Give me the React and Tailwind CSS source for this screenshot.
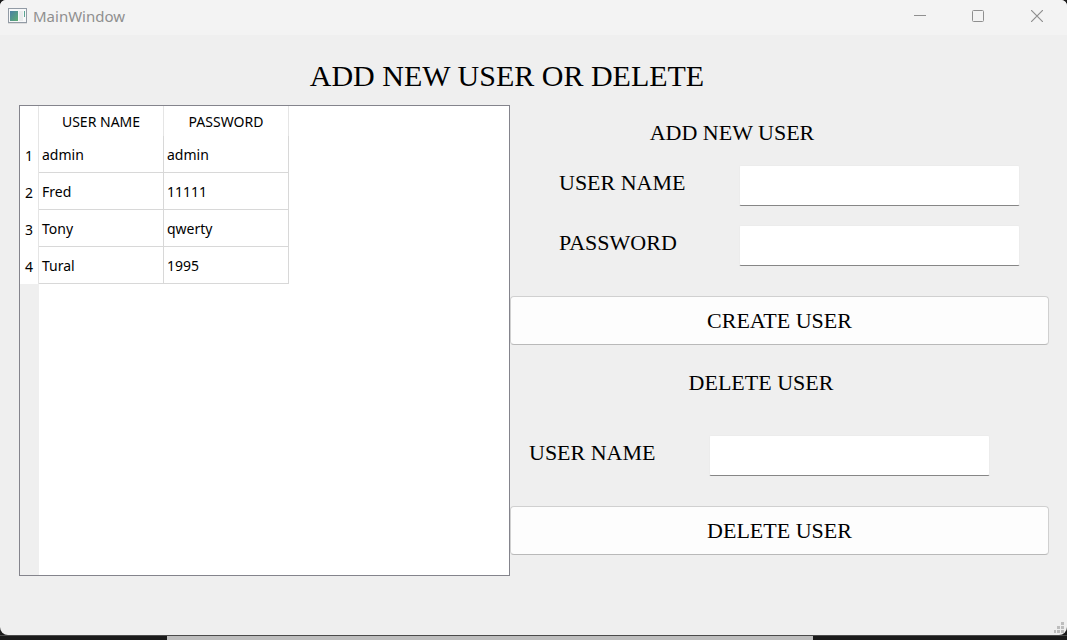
const users = [
  { name: 'admin', password: 'admin' },
  { name: 'Fred', password: '11111' },
  { name: 'Tony', password: 'qwerty' },
  { name: 'Tural', password: '1995' },
];

function TitleBar() {
  return (
    <header className="flex h-[35px] shrink-0 items-center bg-[#f3f3f3] pr-px pb-[3px] pl-2 font-['Noto_Sans',sans-serif] text-[#8f8f8f]">
      <svg className="mr-1.5" width="19" height="16" viewBox="0 0 19 16" aria-hidden="true" shapeRendering="crispEdges">
        <defs>
          <linearGradient id="pane" x1="0" y1="0" x2="1" y2="1">
            <stop offset="0" stopColor="#4a7fa5" />
            <stop offset="1" stopColor="#5fae72" />
          </linearGradient>
        </defs>
        <rect x="0" y="15" width="19" height="1" fill="#dcdcdc" />
        <rect x="0.5" y="0.5" width="18" height="14" fill="#f7f8f9" stroke="#929ba5" />
        <rect x="2" y="3" width="8" height="10" fill="url(#pane)" />
        <rect x="11" y="3" width="4" height="10" fill="#e9ebec" />
        <rect x="16" y="3" width="1" height="6" fill="#5ca592" />
      </svg>
      <h1 className="flex-1 text-[15px] leading-5">MainWindow</h1>
      <button type="button" aria-label="Minimize" className="flex h-8 w-[58px] items-center justify-center">
        <svg width="12" height="12" viewBox="0 0 12 12" stroke="#8f8f8f" fill="none"><path d="M0 5.5h12" /></svg>
      </button>
      <button type="button" aria-label="Maximize" className="flex h-8 w-[58px] items-center justify-center">
        <svg width="12" height="12" viewBox="0 0 12 12" stroke="#8f8f8f" fill="none"><rect x="0.5" y="0.5" width="11" height="11" rx="1" /></svg>
      </button>
      <button type="button" aria-label="Close" className="flex h-8 w-[59px] items-center justify-center">
        <svg width="12" height="12" viewBox="0 0 12 12" stroke="#8f8f8f" strokeWidth="1.2" fill="none"><path d="M0 0l12 12M12 0L0 12" /></svg>
      </button>
    </header>
  );
}

function UserTable() {
  return (
    <div className="flex min-h-[471px] flex-col border border-[#84848c] bg-white font-['Noto_Sans',sans-serif] text-sm text-black">
      <table className="w-[269px] table-fixed border-separate border-spacing-0 text-left">
        <colgroup>
          <col className="w-[19px]" />
          <col className="w-[125px]" />
          <col className="w-[125px]" />
        </colgroup>
        <thead>
          <tr className="h-[30px]">
            <td className="border-r border-[#e5e5e5] p-0" />
            <th scope="col" className="border-r border-[#e5e5e5] p-0 pt-px text-center font-normal">USER NAME</th>
            <th scope="col" className="border-r border-[#e5e5e5] p-0 pt-px text-center font-normal">PASSWORD</th>
          </tr>
        </thead>
        <tbody>
          {users.map((user, i) => (
            <tr key={user.name} className="h-[37px]">
              <th scope="row" className="border-r border-[#e5e5e5] p-0 pt-0.5 text-center font-normal">{i + 1}</th>
              <td className="border-r border-b border-[#d8d8d8] pt-0.5 pr-0 pb-0 pl-[3px]">{user.name}</td>
              <td className="border-r border-b border-[#d8d8d8] pt-0.5 pr-0 pb-0 pl-[3px]">{user.password}</td>
            </tr>
          ))}
        </tbody>
      </table>
      <div className="w-[19px] flex-1 bg-[#efefef]" />
    </div>
  );
}

function Field({ id, label, className }) {
  return (
    <div className={`flex items-center justify-between ${className}`}>
      <label htmlFor={id} className="pb-1.5">{label}</label>
      <input id={id} type="text" className="h-[41px] w-[281px] rounded-xs border border-[#ececec] border-b-[#868686] bg-white px-2 outline-none" />
    </div>
  );
}

function ActionButton({ children }) {
  return (
    <button type="submit" className="h-[49px] w-full rounded border border-[#d0d0d0] border-b-[#b9b9b9] bg-[#fdfdfd]">
      {children}
    </button>
  );
}

export default function App() {
  return (
    <div className="flex min-h-screen flex-col bg-[#1b1b1b]">
      <div className="relative flex flex-1 flex-col overflow-hidden rounded-t-md rounded-b-lg bg-[#efefef] font-['Liberation_Serif',serif] text-black">
        <TitleBar />
        <main className="flex-1 pt-[23px] pr-[18px] pl-[19px]">
          <h2 className="pr-[54px] text-center text-[30px] leading-9">ADD NEW USER OR DELETE</h2>
          <div className="mt-[11px] grid grid-cols-[491fr_539fr]">
            <UserTable />
            <div className="pt-4 text-[22px] leading-6">
              <form onSubmit={(e) => e.preventDefault()}>
                <h3 className="pr-[95px] text-center">ADD NEW USER</h3>
                <Field id="new-name" label="USER NAME" className="mt-5 pr-[29px] pl-[49px]" />
                <Field id="new-password" label="PASSWORD" className="mt-[19px] mb-[30px] pr-[29px] pl-[49px]" />
                <ActionButton>CREATE USER</ActionButton>
              </form>
              <form className="mt-[26px]" onSubmit={(e) => e.preventDefault()}>
                <h3 className="pr-[37px] text-center">DELETE USER</h3>
                <Field id="delete-name" label="USER NAME" className="mt-10 mb-[30px] pr-[59px] pl-[19px]" />
                <ActionButton>DELETE USER</ActionButton>
              </form>
            </div>
          </div>
        </main>
        <svg className="absolute right-[3px] bottom-[2px]" width="10" height="11" viewBox="0 0 10 11" fill="#bdbdbd" aria-hidden="true">
          <path d="M7 0h3v3H7zM3 4h3v3H3zM7 4h3v3H7zM0 8h2v3H0zM3 8h3v3H3zM7 8h3v3H7z" />
        </svg>
      </div>
      <div className="flex h-[5px] shrink-0 border-t border-[#4a4a4a]">
        <div className="w-[167px]" />
        <div className="flex-1 bg-[#bdbdbd]" />
        <div className="w-[254px]" />
      </div>
    </div>
  );
}
